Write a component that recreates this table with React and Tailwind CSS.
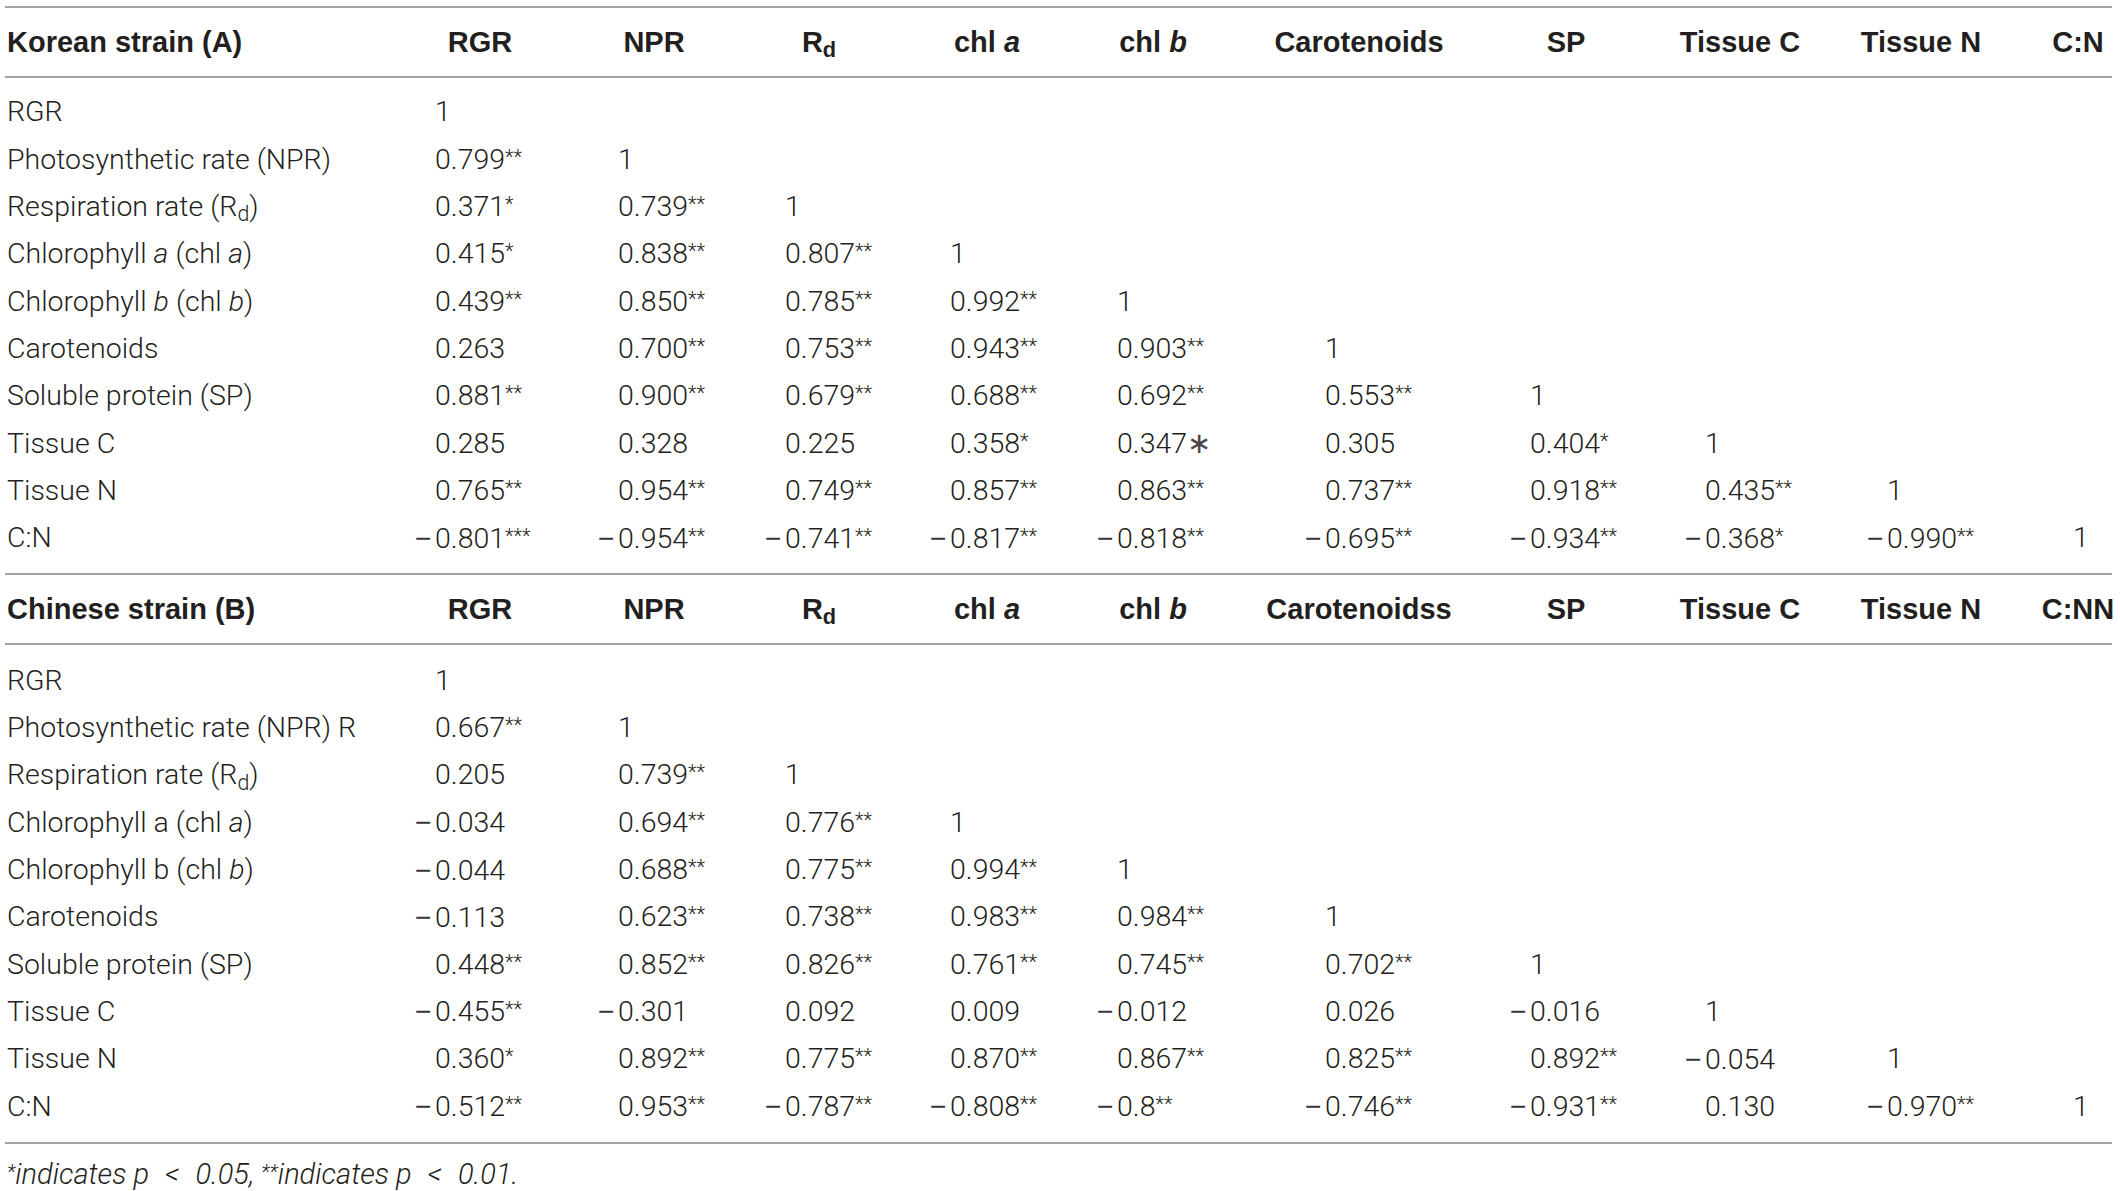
const COLS = 'grid grid-cols-[388px_174px_174px_156px_180px_152px_260px_154px_194px_168px_107px]';

const PADS = ['pl-[42px]', 'pl-[51px]', 'pl-[44px]', 'pl-[53px]', 'pl-[40px]', 'pl-[96px]', 'pl-[41px]', 'pl-[62px]', 'pl-[50px]', 'pl-[68px]'];

const RULE = 'h-[2px] bg-[#a3a3a3]';

const korean = {
  title: 'Korean strain (A)',
  last: 'C:N',
  car: 'Carotenoids',
  bodyPad: 'pt-[11px] pb-[11px]',
  rows: [
    ['RGR', ['1']],
    ['Photosynthetic rate (NPR)', ['0.799**', '1']],
    [<>Respiration rate (R<sub>d</sub>)</>, ['0.371*', '0.739**', '1']],
    [<>Chlorophyll <i>a</i> (chl <i>a</i>)</>, ['0.415*', '0.838**', '0.807**', '1']],
    [<>Chlorophyll <i>b</i> (chl <i>b</i>)</>, ['0.439**', '0.850**', '0.785**', '0.992**', '1']],
    ['Carotenoids', ['0.263', '0.700**', '0.753**', '0.943**', '0.903**', '1']],
    ['Soluble protein (SP)', ['0.881**', '0.900**', '0.679**', '0.688**', '0.692**', '0.553**', '1']],
    ['Tissue C', ['0.285', '0.328', '0.225', '0.358*', '0.347\u2217', '0.305', '0.404*', '1']],
    ['Tissue N', ['0.765**', '0.954**', '0.749**', '0.857**', '0.863**', '0.737**', '0.918**', '0.435**', '1']],
    ['C:N', ['−0.801***', '−0.954**', '−0.741**', '−0.817**', '−0.818**', '−0.695**', '−0.934**', '−0.368*', '−0.990**', '1']],
  ],
};

const chinese = {
  title: 'Chinese strain (B)',
  last: 'C:NN',
  car: 'Carotenoidss',
  bodyPad: 'pt-[12px] pb-[11px]',
  rows: [
    ['RGR', ['1']],
    ['Photosynthetic rate (NPR) R', ['0.667**', '1']],
    [<>Respiration rate (R<sub>d</sub>)</>, ['0.205', '0.739**', '1']],
    [<>Chlorophyll a (chl <i>a</i>)</>, ['−0.034', '0.694**', '0.776**', '1']],
    [<>Chlorophyll b (chl <i>b</i>)</>, ['−0.044', '0.688**', '0.775**', '0.994**', '1']],
    ['Carotenoids', ['−0.113', '0.623**', '0.738**', '0.983**', '0.984**', '1']],
    ['Soluble protein (SP)', ['0.448**', '0.852**', '0.826**', '0.761**', '0.745**', '0.702**', '1']],
    ['Tissue C', ['−0.455**', '−0.301', '0.092', '0.009', '−0.012', '0.026', '−0.016', '1']],
    ['Tissue N', ['0.360*', '0.892**', '0.775**', '0.870**', '0.867**', '0.825**', '0.892**', '−0.054', '1']],
    ['C:N', ['−0.512**', '0.953**', '−0.787**', '−0.808**', '−0.8**', '−0.746**', '−0.931**', '0.130', '−0.970**', '1']],
  ],
};

// number with hanging minus so the digits line up
function Val({ v }) {
  const neg = v.startsWith('−');
  const body = neg ? v.slice(1) : v;
  const m = body.match(/^([0-9.]+)(.*)$/);
  const stars = m[2];
  return (
    <span className="whitespace-nowrap">
      {neg && (
        <span className="inline-block w-[20px] -ml-[20px] font-['Liberation_Sans',Arial,sans-serif] font-normal text-[#3a3637]">−</span>
      )}
      {m[1]}
      {stars === '*' || stars === '**' || stars === '***' ? (
        <span className="text-[20px] align-[5px]">{stars}</span>
      ) : (
        <span className="text-[#4a4647]">{stars}</span>
      )}
    </span>
  );
}

function Section({ data }) {
  const heads = [
    'RGR',
    'NPR',
    <>R<sub>d</sub></>,
    <>chl <i>a</i></>,
    <>chl <i>b</i></>,
    data.car,
    'SP',
    'Tissue C',
    'Tissue N',
  ];

  return (
    <div>
      <div className={RULE} />
      <div className={`${COLS} h-[68px] items-center font-['Liberation_Sans',Arial,sans-serif] font-bold text-[29px] text-[#231f20]`}>
        <div className="pl-[2px] whitespace-nowrap">{data.title}</div>
        {heads.map((h, i) => (
          <div key={i} className="flex justify-center whitespace-nowrap">
            <span>{h}</span>
          </div>
        ))}
        <div className="pl-[39px] flex justify-center whitespace-nowrap">
          <span>{data.last}</span>
        </div>
      </div>
      <div className={RULE} />
      <div className={data.bodyPad}>
        {data.rows.map(([label, vals], r) => (
          <div key={r} className={`${COLS} h-[47.33px] items-center`}>
            <div className="pl-[2px] whitespace-nowrap">{label}</div>
            {vals.map((v, c) => (
              <div key={c} className={PADS[c]}>
                <Val v={v} />
              </div>
            ))}
          </div>
        ))}
      </div>
    </div>
  );
}

export default function App() {
  return (
    <div className="min-h-screen bg-white pt-[6px] pl-[5px] font-['Roboto','Liberation_Sans',sans-serif] font-light text-[28.5px] leading-none text-[#231f20]">
      <div className="w-[2107px]">
        <Section data={korean} />
        <Section data={chinese} />
        <div className={RULE} />
        <p className="pt-[14px] pl-[2px] leading-[28px] italic text-[29px]">
          <span className="text-[20px] align-[5px]">*</span>indicates p<span className="mx-[9px]"> &lt; </span>0.05,{' '}
          <span className="text-[20px] align-[5px]">**</span>indicates p<span className="mx-[9px]"> &lt; </span>0.01.
        </p>
      </div>
    </div>
  );
}
